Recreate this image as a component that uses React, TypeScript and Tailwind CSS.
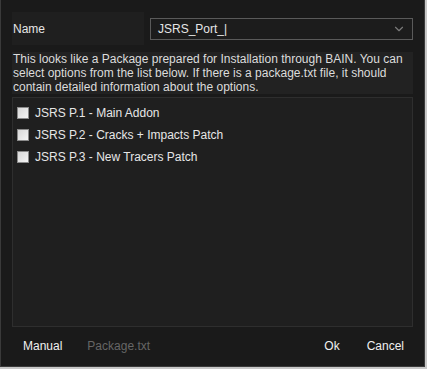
import { ChevronDown } from "lucide-react";

const options = [
  "JSRS P.1 - Main Addon",
  "JSRS P.2 - Cracks + Impacts Patch",
  "JSRS P.3 - New Tracers Patch",
];

export default function App() {
  return (
    <div
      className="flex h-[369px] w-[427px] flex-col bg-[#c8c8c8] text-[12px] text-[#e6e6e6]"
      style={{ fontFamily: '"Liberation Sans", Arial, sans-serif' }}
    >
      <div className="flex h-[367px] w-[425px] flex-col border-l border-r border-b border-[#3a3a3a] bg-[#1a1a1a]">
        <div className="flex flex-1 flex-col px-[11px] pt-[12px]">
          <div className="flex h-[33px] items-center">
            <div className="flex h-full w-[132px] items-center bg-[#1f1f1f] pl-[1px]">Name</div>
            <div className="ml-[6px] flex h-[22px] flex-1 items-center justify-between border border-[#5a5a5a] bg-[#1c1c1c] pl-[7px] pr-[6px]">
              <span>JSRS_Port_|</span>
              <ChevronDown size={14} strokeWidth={2} className="text-[#7a7a7a]" />
            </div>
          </div>
          <p className="mt-[7px] bg-[#222222] pl-[1px] leading-[14px] text-[#dcdcdc]">
            This looks like a Package prepared for Installation through BAIN. You can select options from the list below. If there is a package.txt file, it should contain detailed information about the options.
          </p>
          <div className="mt-[3px] flex h-[230px] flex-col border border-[#2e2e2e] bg-[#1f1f1f] px-[4px] pt-[4px]">
            {options.map((o) => (
              <label key={o} className="flex h-[22px] items-center gap-[6px]">
                <span className="h-[12px] w-[12px] border border-[#8a8a8a] bg-gradient-to-br from-[#d8d8d8] to-[#f4f4f4]" />
                <span>{o}</span>
              </label>
            ))}
          </div>
        </div>
        <div className="flex h-[39px] items-center pb-[2px]">
          <span className="ml-[22px] text-[#f0f0f0]">Manual</span>
          <span className="ml-[25px] text-[#666666]">Package.txt</span>
          <span className="ml-auto text-[#f0f0f0]">Ok</span>
          <span className="ml-[27px] mr-[20px] text-[#f0f0f0]">Cancel</span>
        </div>
      </div>
    </div>
  );
}
